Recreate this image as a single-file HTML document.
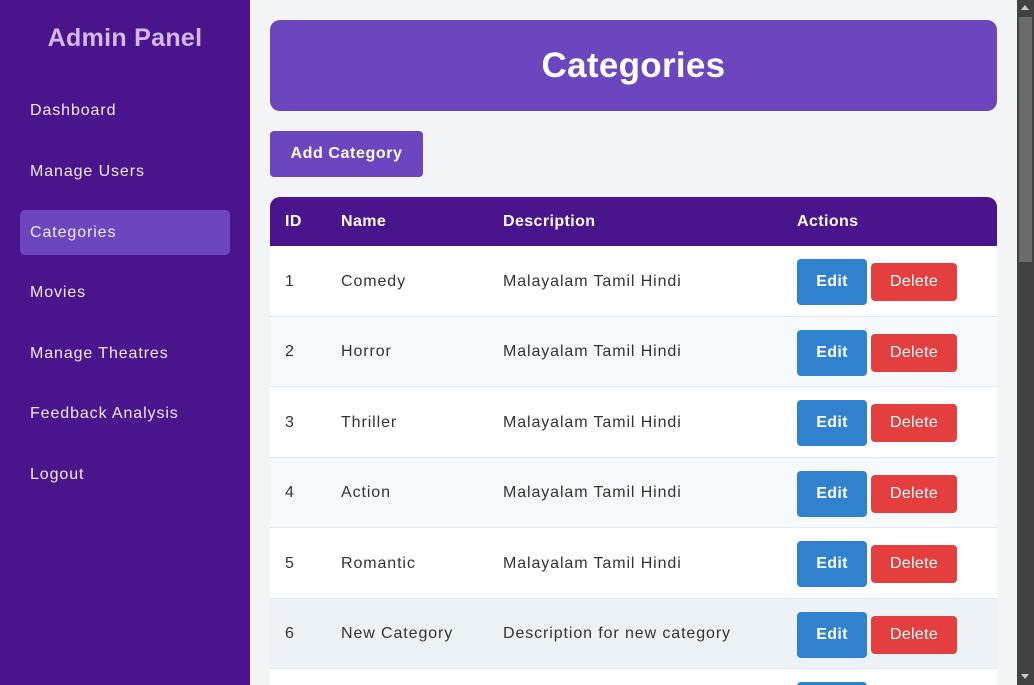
<!DOCTYPE html>
<html><head><style>
*{box-sizing:border-box;margin:0;padding:0}
html,body{width:1034px;height:685px;overflow:hidden}
body{background:#f3f4f6;font-family:"Liberation Sans",sans-serif;position:relative;letter-spacing:0.9px}
.side{position:absolute;left:0;top:0;width:250px;height:685px;background:#4a148c}
.side h2{position:absolute;top:24px;left:0;width:250px;text-align:center;color:#d6b8ff;font-size:25px;font-weight:bold;letter-spacing:0.3px}
.side a{position:absolute;left:20px;width:210px;height:45px;line-height:45px;padding-left:10px;color:#f1e8ff;font-size:16px;border-radius:5px}
.side a.act{background:#6c46be}
.hdr{position:absolute;left:270px;top:20px;width:727px;height:91px;background:#6c46be;border-radius:10px;color:#fff;font-size:35px;font-weight:bold;text-align:center;line-height:91px;letter-spacing:0.3px}
.add{position:absolute;left:270px;top:131px;width:153px;height:46px;background:#6c46be;border-radius:4px;color:#fff;font-weight:bold;font-size:16px;text-align:center;line-height:46px;letter-spacing:0.6px}
.tbl{position:absolute;left:270px;top:197px;width:727px;background:#fff;border-radius:10px 10px 0 0;overflow:hidden}
.th{height:49px;background:#4a148c;color:#fff;font-weight:bold;font-size:16px;position:relative;letter-spacing:0.4px}
.row{height:70.5px;position:relative;border-bottom:1px solid #e2e8f0;font-size:16px;color:#333}
.c{position:absolute;top:50%;transform:translateY(-50%);margin-top:1px}
.e{position:absolute;left:527px;top:13px;width:70px;height:46px;background:#3182ce;color:#fff;border-radius:4px;font-weight:bold;text-align:center;line-height:46px;letter-spacing:0.3px}
.d{position:absolute;left:601px;top:17px;width:86px;height:38px;background:#e53e3e;color:#fff;border-radius:4px;text-align:center;line-height:38px;letter-spacing:0.3px}
.sb{position:absolute;right:0;top:0;width:17px;height:685px;background:#424242}
.th .c{top:24px}
</style></head><body>
<div class="side"><h2>Admin Panel</h2>
<a style="top:88px">Dashboard</a><a style="top:149px">Manage Users</a><a class="act" style="top:210px">Categories</a><a style="top:270px">Movies</a><a style="top:331px">Manage Theatres</a><a style="top:391px">Feedback Analysis</a><a style="top:452px">Logout</a></div>
<div class="hdr">Categories</div>
<div class="add">Add Category</div>
<div class="tbl">
<div class="th"><span class="c" style="left:15px">ID</span><span class="c" style="left:71px">Name</span><span class="c" style="left:233px">Description</span><span class="c" style="left:527px">Actions</span></div>
<div class="row"><span class="c" style="left:15px">1</span><span class="c" style="left:71px">Comedy</span><span class="c" style="left:233px">Malayalam Tamil Hindi</span><div class="e">Edit</div><div class="d">Delete</div></div>
<div class="row" style="background:#f7fafc"><span class="c" style="left:15px">2</span><span class="c" style="left:71px">Horror</span><span class="c" style="left:233px">Malayalam Tamil Hindi</span><div class="e">Edit</div><div class="d">Delete</div></div>
<div class="row"><span class="c" style="left:15px">3</span><span class="c" style="left:71px">Thriller</span><span class="c" style="left:233px">Malayalam Tamil Hindi</span><div class="e">Edit</div><div class="d">Delete</div></div>
<div class="row" style="background:#f7fafc"><span class="c" style="left:15px">4</span><span class="c" style="left:71px">Action</span><span class="c" style="left:233px">Malayalam Tamil Hindi</span><div class="e">Edit</div><div class="d">Delete</div></div>
<div class="row"><span class="c" style="left:15px">5</span><span class="c" style="left:71px">Romantic</span><span class="c" style="left:233px">Malayalam Tamil Hindi</span><div class="e">Edit</div><div class="d">Delete</div></div>
<div class="row" style="background:#edf2f7"><span class="c" style="left:15px">6</span><span class="c" style="left:71px">New Category</span><span class="c" style="left:233px">Description for new category</span><div class="e">Edit</div><div class="d">Delete</div></div>
<div class="row"><div class="e">Edit</div><div class="d">Delete</div></div>
</div>
<div class="sb"><div style="position:absolute;left:2px;top:17px;width:13px;height:245px;background:#6b6b6b"></div>
<div style="position:absolute;left:4px;top:5px;width:0;height:0;border-left:4px solid transparent;border-right:4px solid transparent;border-bottom:5px solid #ccc"></div>
<div style="position:absolute;left:4px;top:674px;width:0;height:0;border-left:4px solid transparent;border-right:4px solid transparent;border-top:5px solid #ccc"></div></div>
</body></html>
